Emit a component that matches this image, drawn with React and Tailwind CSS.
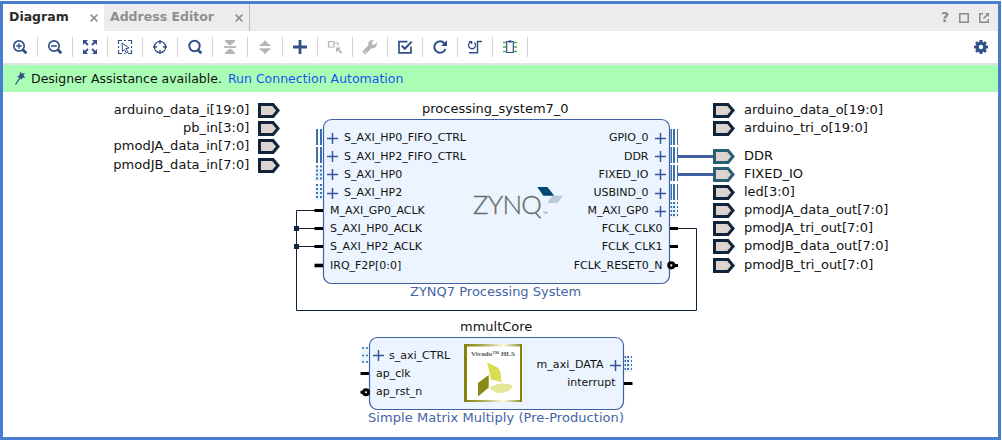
import React from 'react';

const NAVY = '#334f88';
const GREY = '#b4b4b4';

function Icon({ children }) {
  return (
    <svg width="20" height="20" viewBox="0 0 20 20" fill="none" stroke={NAVY} strokeWidth="1.5">
      {children}
    </svg>
  );
}

const Magnifier = ({ children, bold }) => (
  <Icon>
    <circle cx={bold ? 9.5 : 9} cy="9" r="5.2" strokeWidth={bold ? 2 : 1.7} />
    <path d="M12.6 12.6L16.300 16.300" strokeWidth="2.8" />
    {children}
  </Icon>
);

const icons = [
  <Magnifier><path d="M6.2 9h5.6M9 6.2v5.6" strokeWidth="1.4" /></Magnifier>,
  <Magnifier><path d="M6.2 9h5.6" strokeWidth="1.6" /></Magnifier>,
  <Icon>
    <path d="M4 4l4 4M16 4l-4 4M4 16l4-4M16 16l-4-4" strokeWidth="1.8" />
    <path d="M3 3h5L3 8zM17 3v5l-5-5zM3 17v-5l5 5zM17 17h-5l5-5z" fill={NAVY} stroke="none" />
  </Icon>,
  <Icon>
    <path d="M3.5 7V3.5H7M13 3.5h3.500V7M16.500 13v3.500H13M7 16.500H3.500V13" strokeWidth="1.200" />
    <path d="M9 3.500h2M9 16.500h1.500M3.500 9v2M16.500 9v2" strokeWidth="1" />
    <path d="M7 6l7 5-3.200.7 2.400 3.200-1.600 1.100-2.200-3.300L7.500 14.500z" strokeWidth="1" fill="#fff" />
  </Icon>,
  <Icon>
    <circle cx="10" cy="10" r="5.700" strokeWidth="1.200" />
    <path d="M10 3v4M10 13v4M3 10h4M13 10h4" strokeWidth="1.400" />
  </Icon>,
  <Magnifier bold />,
  <Icon>
    <path d="M4 10h12" stroke={GREY} strokeWidth="1.800" />
    <path d="M5 3h10v1.200L11 8H9L5 4.200zM5 17h10v-1.200L11 12H9l-4 3.800z" fill={GREY} stroke="none" />
  </Icon>,
  <Icon>
    <path d="M5 8.800L10 3.300l5 5.500zM5 11.800h10l-5 5.500z" fill={GREY} stroke="none" />
    <path d="M4.500 8.300h11M4.500 12.300h11" stroke={GREY} strokeWidth="1.600" />
  </Icon>,
  <Icon><path d="M3 10h14M10 3v14" strokeWidth="2.800" /></Icon>,
  <Icon>
    <path d="M3.500 4.500h5.500v5.500H3.500z" stroke={GREY} strokeWidth="1.200" />
    <path d="M10 6h3v3" stroke={GREY} strokeWidth="1.200" />
    <path d="M11 10.500h5l-1.700 1.700 2.700 2.900v1.400h-1l-3-2.900-2 1.900z" fill={GREY} stroke="none" />
  </Icon>,
  <Icon>
    <path
      d="M16.700 5.600l-2.600 2.500-2-.5-.5-2 2.500-2.500C11.600 2.400 9.300 3.400 8.500 5.400c-.4 1-.3 1.900 0 2.800L3.200 13.400c-1.600 1.900 1.200 4.700 3.100 3.100l5.200-5.200c3.400 1 6.200-2.200 5.200-5.700z"
      fill={GREY}
      stroke="none"
    />
    <circle cx="5" cy="15" r=".8" fill="#fff" stroke="none" />
  </Icon>,
  <Icon>
    <path d="M16 9.500v6.300H4V4.600h8.500" strokeWidth="1.700" />
    <path d="M6.800 8.800l3 3L16.700 4.600" strokeWidth="2" />
  </Icon>,
  <Icon>
    <path d="M14.300 6.200A5.700 5.700 0 1 0 15.400 12" strokeWidth="2.100" />
    <path d="M17 3.200V9h-6z" fill={NAVY} stroke="none" />
  </Icon>,
  <Icon>
    <path d="M5 5.400a3.500 3.500 0 1 0 4.300.2" strokeWidth="1.300" />
    <path d="M3.500 4h3.800v3.800z" fill={NAVY} stroke="none" />
    <path d="M4 15.800h8.500V4.500H17" strokeWidth="1.500" />
  </Icon>,
  <Icon>
    <path d="M3 5.500h3.500M3 10h3.500M3 14.500h3.500M13.500 5.500H17M13.500 10H17M13.500 14.500H17" stroke="#4fae4f" strokeWidth="1.700" />
    <path d="M6.700 4.500h6.600v11H6.700z" strokeWidth="1.200" />
    <path d="M8.500 4.500h3" strokeWidth="2.200" />
  </Icon>,
];

function Gear() {
  return (
    <svg width="16" height="16" viewBox="0 0 16 16">
      <g fill={NAVY}>
        {[0, 45, 90, 135].map((a) => (
          <rect key={a} x="6.500" y="1" width="3" height="14" rx=".6" transform={`rotate(${a} 8 8)`} />
        ))}
        <circle cx="8" cy="8" r="5.300" />
      </g>
      <circle cx="8" cy="8" r="2.200" fill="#fff" />
    </svg>
  );
}

const Close = () => (
  <svg width="8" height="8" viewBox="0 0 8 8" stroke="#8f8f8f" strokeWidth="1.500">
    <path d="M.6.600l6.800 6.800M7.400.600L.6 7.400" />
  </svg>
);

// x is the left edge, or the right edge when `end` is set; y is the baseline.
function Label({ x, y, end, small, blue, children, spread }) {
  return (
    <span
      className={`absolute whitespace-nowrap leading-[18px] ${small ? 'text-[11px]' : 'text-[13px]'} ${
        blue ? 'text-[#4564a6]' : 'text-[#111]'
      } ${spread ? 'tracking-[0.06px]' : ''}`}
      style={end ? { right: 1002 - x, top: y - (small ? 12 : 13) } : { left: x, top: y - (small ? 12 : 13) }}
    >
      {children}
    </span>
  );
}

function Port({ x, y, color = '#10243c' }) {
  return <path d={`M${x + 1.5} ${y + 1.5}h13.500l5 6-5 6h-13.500z`} fill="#ddd4cf" stroke={color} strokeWidth="3" />;
}

const Plus = ({ x, y }) => <path d={`M${x - 5.5} ${y}h11M${x} ${y - 5.5}v11`} stroke="#38539a" strokeWidth="1.500" />;

function Bus({ bars, y, dashed, x }) {
  return (
    <g>
      {dashed && <rect x={x} y={y} width="8" height="16" fill="#e8f4fc" />}
      {bars.map(([bx, w]) => (
        <path key={bx} d={`M${bx + w / 2} ${y}v16`} stroke="#3c70a8" strokeWidth={w} strokeDasharray={dashed ? '2 2' : undefined} />
      ))}
    </g>
  );
}

const leftBars = [[316, 2], [320, 2]];
const rightBars = [[670.5, 1.5], [673, 2], [677, 1]];

const inputs = [
  ['arduino_data_i[19:0]', 114, 103],
  ['pb_in[3:0]', 132, 121],
  ['pmodJA_data_in[7:0]', 150, 139],
  ['pmodJB_data_in[7:0]', 169, 158],
];
const outputs = [
  ['arduino_data_o[19:0]', 114, 103],
  ['arduino_tri_o[19:0]', 132, 121],
  ['DDR', 160, 149],
  ['FIXED_IO', 178, 167],
  ['led[3:0]', 196, 185],
  ['pmodJA_data_out[7:0]', 214, 203],
  ['pmodJA_tri_out[7:0]', 232, 221],
  ['pmodJB_data_out[7:0]', 250, 239],
  ['pmodJB_tri_out[7:0]', 269, 258],
];
const psLeft = [
  ['S_AXI_HP0_FIFO_CTRL', 344, 141],
  ['S_AXI_HP2_FIFO_CTRL', 344, 160],
  ['S_AXI_HP0', 344, 178],
  ['S_AXI_HP2', 344, 196],
  ['M_AXI_GP0_ACLK', 330, 214],
  ['S_AXI_HP0_ACLK', 330, 232],
  ['S_AXI_HP2_ACLK', 330, 250],
  ['IRQ_F2P[0:0]', 330, 269],
];
const psRight = [
  ['GPIO_0', 648.5, 141],
  ['DDR', 648.5, 160],
  ['FIXED_IO', 648.5, 178],
  ['USBIND_0', 648.5, 196],
  ['M_AXI_GP0', 648.5, 214],
  ['FCLK_CLK0', 662.5, 232],
  ['FCLK_CLK1', 662.5, 250],
  ['FCLK_RESET0_N', 662.5, 269],
];

function Diagram() {
  return (
    <>
      <svg className="absolute left-0 top-0" width="1002" height="441" viewBox="0 0 1002 441" fill="none">
        <rect x="323.500" y="119.500" width="346" height="164" rx="8" fill="#ecf5ff" stroke="#3f60a6" strokeWidth="1.200" />
        <rect x="369.500" y="337.500" width="254" height="72" rx="8" fill="#ecf5ff" stroke="#3f60a6" strokeWidth="1.200" />

        <path d="M315 210.500h-18.500v100h400v-82H678M296.500 228.500H315M296.500 246.500H315" stroke="#10243c" />
        <path d="M294 226h5v5h-5zM294 244h5v5h-5z" fill="#10243c" />
        <path d="M678 156.500h36M678 174.500h36" stroke="#3f60a2" strokeWidth="3" />

        {inputs.map(([t, , y]) => <Port key={t} x={258} y={y} />)}
        {outputs.map(([t, , y]) => (
          <Port key={t} x={713} y={y} color={t === 'DDR' || t === 'FIXED_IO' ? '#2a5f73' : undefined} />
        ))}

        {[138.5, 156.5, 174.5, 193.5].map((y, i) => (
          <g key={y}>
            <Plus x={332.5} y={y} />
            <Bus x={315} bars={leftBars} y={[129, 147, 165.500, 184][i]} dashed={i > 1} />
          </g>
        ))}
        {[138.5, 156.5, 174.5, 193.5, 211.5].map((y, i) => (
          <g key={y}>
            <Plus x={660.5} y={y} />
            <Bus x={670} bars={rightBars} y={[129, 147, 165, 184, 202][i]} dashed={i === 4} />
          </g>
        ))}

        <path d="M314.500 210.500h8.500M314.500 228.500h8.500M314.500 246.500h8.500M670 228.500h8M670 246.500h8M671 265.500h7M360.500 373.500h8.500M360.500 392.300h4M624 383.500h8.500" stroke="#000" strokeWidth="3" />
        <path d="M314.500 265.500h8.500" stroke="#000" strokeWidth="3.600" />
        <circle cx="671.300" cy="265.300" r="2.600" fill="#fff" stroke="#000" strokeWidth="3" />
        <circle cx="366" cy="392.300" r="2.500" fill="#fff" stroke="#000" strokeWidth="2.900" />

        <Plus x={378.500} y={355.500} />
        <Plus x={615.500} y={365.500} />
        <rect x="361" y="347" width="8" height="16" fill="#e8f4fc" />
        <path d="M362 348h2M366 348h2M362 355.500h2M366 355.500h2M362 362h2M366 362h2" stroke="#3c70a8" strokeWidth="1.500" />
        <Bus x={624} bars={[[624.5, 1.5], [627, 2], [631, 1]]} y={356} dashed />

        <path d="M537.300 187h10l7 8.700h-11z" fill="#00486e" />
        <path d="M552.500 195.700h10.800l-6 7.300h-10z" fill="#b8cad8" />

        <defs>
          <linearGradient id="olive" x1="0" y1="0" x2="1" y2="0">
            <stop offset="0" stopColor="#81810a" />
            <stop offset=".3" stopColor="#a5a54a" />
            <stop offset=".68" stopColor="#fbfbe8" />
            <stop offset="1" stopColor="#8a8a1c" />
          </linearGradient>
        </defs>
        <rect x="464" y="344" width="58" height="58" fill="url(#olive)" />
        <path d="M464 344h3v58h-3zM520 344h2v58h-2z" fill="#84840f" />
        <rect x="467" y="346.500" width="53" height="53.500" fill="#fff" />
        <path d="M487 361.700c4 4 11 4 13 9 1 3 1 8 1.500 11.300l-10.500-2.500z" fill="#d8de50" />
        <path d="M478 383l10.700-8v12.500L478 396.500z" fill="#8a8a12" />
        <path d="M489.500 388c6-5 17-6 23.500-2-5 8-16 10-23.500 2z" fill="#e4e796" />
      </svg>

      {inputs.map(([t, y]) => <Label key={t} x={249.500} y={y} end spread>{t}</Label>)}
      {outputs.map(([t, y]) => <Label key={t} x={744} y={y}>{t}</Label>)}
      <Label x={422} y={113}>processing_system7_0</Label>
      {psLeft.map(([t, x, y]) => <Label key={t} x={x} y={y} small>{t}</Label>)}
      {psRight.map(([t, x, y]) => <Label key={t} x={x} y={y} small end>{t}</Label>)}
      <Label x={410} y={296} blue>ZYNQ7 Processing System</Label>
      <Label x={460} y={331}>mmultCore</Label>
      <Label x={389} y={359} small>s_axi_CTRL</Label>
      <Label x={376} y={377} small>ap_clk</Label>
      <Label x={376} y={395} small>ap_rst_n</Label>
      <Label x={603.500} y={368} small end spread>m_axi_DATA</Label>
      <Label x={615.500} y={386} small end>interrupt</Label>
      <Label x={368} y={422} blue spread>Simple Matrix Multiply (Pre-Production)</Label>

      <span className="absolute left-[473px] top-[189px] font-['Lato',sans-serif] text-[26px] font-light leading-[30px] tracking-[-0.8px] text-[#6a6a6a] [-webkit-text-stroke:0.3px_#6a6a6a]">ZYNQ</span>
      <span className="absolute left-[543px] top-[211px] text-[3px] leading-[4px] text-[#6a6a6a]">TM</span>
      <span className="absolute left-[471px] top-[350px] whitespace-nowrap font-['Liberation_Serif',serif] text-[7px] font-bold leading-[9px] text-[#555]">Vivado™ HLS</span>
    </>
  );
}

export default function App() {
  return (
    <div className="h-[441px] w-[1002px] bg-white pb-px pr-px pt-px font-['DejaVu_Sans',sans-serif]">
      <div className="flex h-[439px] w-[1001px] flex-col border-[3px] border-[#487ecf] bg-white">
        <div className="flex h-[27px] shrink-0 bg-[#ececec] text-[12.5px] font-bold">
          <div className="flex w-[101px] items-center justify-between bg-white pl-[6px] pr-[6px] text-[#2b2b2b]">
            <span>Diagram</span>
            <Close />
          </div>
          <div className="flex w-[146px] items-center justify-between border-r border-[#bdbdbd] pl-[6px] pr-[6px] text-[#8f8f8f]">
            <span>Address Editor</span>
            <Close />
          </div>
          <div className="flex flex-1 items-center justify-end gap-[10px] pr-[9px] text-[#8a8a8a]">
            <span className="text-[14px]">?</span>
            <svg width="10" height="10" viewBox="0 0 10 10" fill="none" stroke="#8a8a8a" strokeWidth="1.500">
              <path d="M.8.800h8.400v8.400H.8z" />
            </svg>
            <svg width="10" height="10" viewBox="0 0 10 10" fill="none" stroke="#8a8a8a" strokeWidth="1.500">
              <path d="M4 .8H.8v8.400h8.400V6M4.500 5.500L8 2" />
              <path d="M6 0h4v4z" fill="#8a8a8a" stroke="none" />
            </svg>
          </div>
        </div>
        <div className="flex h-8 shrink-0 items-center">
          {icons.map((icon, i) => (
            <div key={i} className="flex h-5 w-[35px] items-center border-r border-[#d4d4d4] pl-[7px]">
              {icon}
            </div>
          ))}
          <div className="flex flex-1 justify-end pr-[9px]">
            <Gear />
          </div>
        </div>
        <div className="flex h-[29px] shrink-0 items-center border-t-2 border-[#e4e4e8] bg-[#aafdb4] pl-[11px] text-[12.5px]">
          <svg width="12" height="15" viewBox="0 0 12 15">
            <path d="M6.500.5l1.400 2.200 3-.7-1.300 2.700L11.500 7l-3-.2-1.300 2.200L6 6.500 3 6l2.500-2z" fill={NAVY} />
            <path d="M6.500 6L1.500 13.500" stroke={NAVY} strokeWidth="1.300" />
          </svg>
          <span className="ml-[5px] pt-px text-[#111]">Designer Assistance available.</span>
          <a className="ml-[6px] pt-px text-[#1557f0]">Run Connection Automation</a>
        </div>
        <div className="flex-1">
          <Diagram />
        </div>
      </div>
    </div>
  );
}
